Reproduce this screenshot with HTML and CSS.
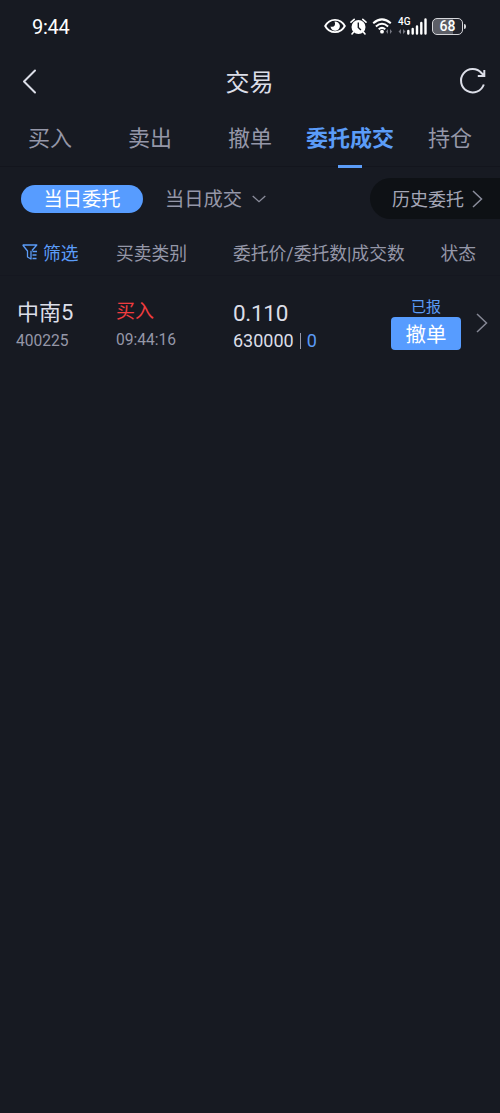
FILE: index.html
```html
<!DOCTYPE html>
<html lang="zh-CN">
<head>
    <meta charset="UTF-8">
    <meta name="viewport" content="width=device-width, initial-scale=1.0">
    <title>交易</title>
    <link rel="stylesheet" href="styles.css">
</head>
<body>
    <div class="status-bar">
        <div class="clock">9:44</div>
        <div class="status-icons">
            <svg class="icon-eye" width="22" height="16" viewBox="0 0 22 16">
                <path d="M1.2 8C5.5-.2 16.5-.2 20.8 8C16.5 16.2 5.5 16.2 1.2 8Z" fill="none" stroke="#fff" stroke-width="1.9"/>
                <path d="M10.500 3.500A4.700 4.700 0 1 1 6.500 8.500Q9.500 9.500 10.800 7.200Q11.500 5.500 10.500 3.500Z" fill="#fff"/>
            </svg>
            <svg class="icon-alarm" width="17" height="17" viewBox="0 0 17 17">
                <circle cx="8.5" cy="9" r="7" fill="#fff"/>
                <path d="M1 4.2L4.2 1.3M16 4.2L12.8 1.3M3.6 14L2 16M13.4 14L15 16" stroke="#fff" stroke-width="1.6" stroke-linecap="round"/>
                <path d="M8.3 4.500v5l2.600 2.500" fill="none" stroke="#171a22" stroke-width="1.4"/>
            </svg>
            <svg class="icon-wifi" width="21" height="16" viewBox="0 0 21 16">
                <path d="M1.2 5.2Q10 -2.5 18.8 5.2M3.9 8.4Q10 3.2 16.1 8.4M6.7 11.2Q10 8.6 13.3 11.2" fill="none" stroke="#fff" stroke-width="2"/>
                <circle cx="10" cy="13.7" r="1.9" fill="#fff"/>
                <path d="M16 11l-2 2.5 2 2.5zM18 11l2 2.5-2 2.5z" fill="#777983"/>
            </svg>
            <div class="signal">
                <span class="network">4G</span>
                <svg width="29" height="17" viewBox="0 0 29 17">
                    <path d="M3 11l-2.5 2.5L3 16zM5 11l2.5 2.5L5 16z" fill="#777983"/>
                    <path d="M10.3 13v2.5M14.7 11v4.500M19 8.500v7M23.3 5v10.5M27.5 1.5v14" stroke="#fff" stroke-width="2.4" stroke-linecap="round"/>
                </svg>
            </div>
            <div class="battery">68</div>
            <div class="battery-tip"></div>
        </div>
    </div>

    <div class="header">
        <svg class="back" width="16" height="26" viewBox="0 0 16 26">
            <path d="M13 2.5L2 13.5L13 24.5" fill="none" stroke="#dcdee8" stroke-width="2" stroke-linecap="round" stroke-linejoin="round"/>
        </svg>
        <h1>交易</h1>
        <svg class="refresh" width="28" height="28" viewBox="0 0 28 28">
            <path d="M24.8 17.500A11.700 11.700 0 1 1 22.500 6L25 8.500M25.300 3V9H18.800" fill="none" stroke="#dcdee8" stroke-width="2"/>
        </svg>
    </div>

    <div class="tabs">
        <div class="tab">买入</div>
        <div class="tab">卖出</div>
        <div class="tab">撤单</div>
        <div class="tab active">委托成交</div>
        <div class="tab">持仓</div>
    </div>

    <div class="filters">
        <div class="pill">当日委托</div>
        <div class="today-deals"><span>当日成交</span>
            <svg width="14" height="8" viewBox="0 0 14 8">
                <path d="M.7 1L7 6.7L13.3 1" fill="none" stroke="#8b8d9c" stroke-width="1.3"/>
            </svg>
        </div>
        <div class="history"><span>历史委托</span>
            <svg width="11" height="18" viewBox="0 0 11 18">
                <path d="M1 1L9.5 9L1 17" fill="none" stroke="#8b8d9c" stroke-width="1.5"/>
            </svg>
        </div>
    </div>

    <div class="row table-head">
        <div class="col-name">
            <svg width="16" height="16" viewBox="0 0 16 16">
                <path d="M.7 1H14.800L10 6.500M.7 1L5.500 7V13L9 15V6.800M10.500 7.500H15M10.500 11H14.500M10.500 14.500H14.500" fill="none" stroke="#5b9cf8" stroke-width="1.300" stroke-linejoin="round"/>
            </svg>
            筛选
        </div>
        <div class="col-type">买卖类别</div>
        <div class="col-price">委托价/委托数|成交数</div>
        <div class="col-state">状态</div>
    </div>

    <div class="row order">
        <div class="col-name">
            <div class="stock">中南5</div>
            <div class="code">400225</div>
        </div>
        <div class="col-type">
            <div class="side">买入</div>
            <div class="time">09:44:16</div>
        </div>
        <div class="col-price">
            <div class="price">0.110</div>
            <div class="amount">630000<i></i><span>0</span></div>
        </div>
        <div class="col-state">
            <div class="state">已报</div>
            <button class="cancel">撤单</button>
        </div>
        <svg class="arrow" width="12" height="20" viewBox="0 0 12 20">
            <path d="M1 1L10.5 10L1 19" fill="none" stroke="#858794" stroke-width="1.5"/>
        </svg>
    </div>
</body>
</html>
```

FILE: styles.css
```css
* {
    box-sizing: border-box;
}

body {
    margin: 0;
    min-height: 1113px;
    background-color: #171a22;
    color: #9597a8;
    font-family: Roboto, "Noto Sans CJK SC", sans-serif;
    overflow: hidden;
}

svg {
    display: block;
    flex: none;
}

.status-bar {
    display: flex;
    justify-content: space-between;
    align-items: center;
    height: 52px;
    padding: 0 34px 0 32px;
    color: #fff;
}

.clock {
    padding-top: 1px;
    font-size: 20px;
    letter-spacing: -0.3px;
}

.status-icons {
    display: flex;
    align-items: center;
}

.icon-alarm {
    margin-left: 4px;
}

.icon-wifi {
    margin-left: 5px;
}

.signal {
    position: relative;
    margin-left: 5px;
}

.network {
    position: absolute;
    top: -1px;
    left: 0;
    font-size: 10px;
    font-weight: 500;
    line-height: 10px;
}

.battery {
    width: 31px;
    height: 17px;
    margin-left: 5px;
    border: 1.5px solid #d5d6da;
    border-radius: 5px;
    background: linear-gradient(to right, #5c5e66 68%, #22242d 68%);
    font-size: 14px;
    font-weight: 500;
    line-height: 15px;
    text-align: center;
}

.battery-tip {
    width: 2px;
    height: 5px;
    margin-left: 1px;
    border-radius: 0 2px 2px 0;
    background-color: #d5d6da;
}

.header {
    display: flex;
    justify-content: space-between;
    align-items: center;
    height: 58px;
    padding: 0 13px 0 22px;
}

.header h1 {
    margin: 0 0 1px 2px;
    color: #dcdee8;
    font-size: 24px;
    font-weight: normal;
}

.tabs {
    display: grid;
    grid-template-columns: repeat(5, 1fr);
    height: 57px;
    border-bottom: 1px solid #13151d;
    font-size: 22px;
    line-height: 58px;
    text-align: center;
}

.tab.active {
    position: relative;
    color: #5b9cf8;
    font-weight: bold;
}

.tab.active::after {
    content: "";
    position: absolute;
    left: 38px;
    bottom: 0;
    width: 24px;
    height: 3px;
    background-color: #5b9cf8;
}

.filters {
    display: flex;
    align-items: center;
    height: 63px;
    padding-left: 21px;
}

.pill {
    width: 122px;
    height: 28px;
    border-radius: 14px;
    background-color: #579cff;
    color: #fff;
    font-size: 19.3px;
    line-height: 29px;
    text-align: center;
}

.today-deals {
    display: flex;
    align-items: center;
    gap: 10px;
    margin-left: 22px;
    font-size: 19.3px;
}

.today-deals span,
.history span {
    padding-bottom: 1px;
}

.history {
    display: flex;
    align-items: center;
    gap: 8px;
    width: 130px;
    height: 41px;
    margin-left: auto;
    padding-left: 22px;
    border-radius: 21px 0 0 21px;
    background-color: #0e1115;
    color: #a4a6b6;
    font-size: 18px;
}

.row {
    display: grid;
    grid-template-columns: 100px 117px 158px 85px 1fr;
    padding-left: 16px;
}

.table-head {
    align-items: center;
    height: 46px;
    padding-bottom: 2px;
    border-bottom: 1px solid #151720;
    font-size: 17.8px;
    white-space: nowrap;
}

.table-head .col-name {
    display: flex;
    align-items: center;
    gap: 5px;
    padding-left: 6px;
    color: #5b9cf8;
}

.table-head .col-state {
    text-align: right;
}

.order {
    padding-top: 22px;
}

.stock {
    padding-left: 1px;
    color: #dcdee8;
    font-size: 22px;
    line-height: 30px;
}

.code,
.time {
    font-size: 15.6px;
    line-height: 22px;
}

.code {
    margin-top: 2px;
}

.side {
    color: #f03c3f;
    font-size: 19px;
    line-height: 28px;
}

.time {
    margin-top: 3px;
}

.price {
    color: #dcdee8;
    font-size: 22.5px;
    letter-spacing: -0.3px;
    line-height: 31px;
}

.amount {
    display: flex;
    align-items: center;
    color: #dcdee8;
    font-size: 18px;
    line-height: 23px;
}

.amount i {
    width: 1px;
    height: 16px;
    margin: 0 6px;
    background-color: #9597a8;
}

.amount span {
    color: #5b9cf8;
}

.order .col-state {
    width: 70px;
    text-align: center;
}

.state {
    color: #5b9cf8;
    font-size: 15px;
    line-height: 19px;
}

.cancel {
    display: block;
    width: 70px;
    height: 33px;
    padding: 2px 0 0;
    border: none;
    border-radius: 4px;
    background-color: #579cff;
    color: #fff;
    font-family: inherit;
    font-size: 20.5px;
    line-height: 30px;
}

.arrow {
    margin-top: 15px;
}
```
